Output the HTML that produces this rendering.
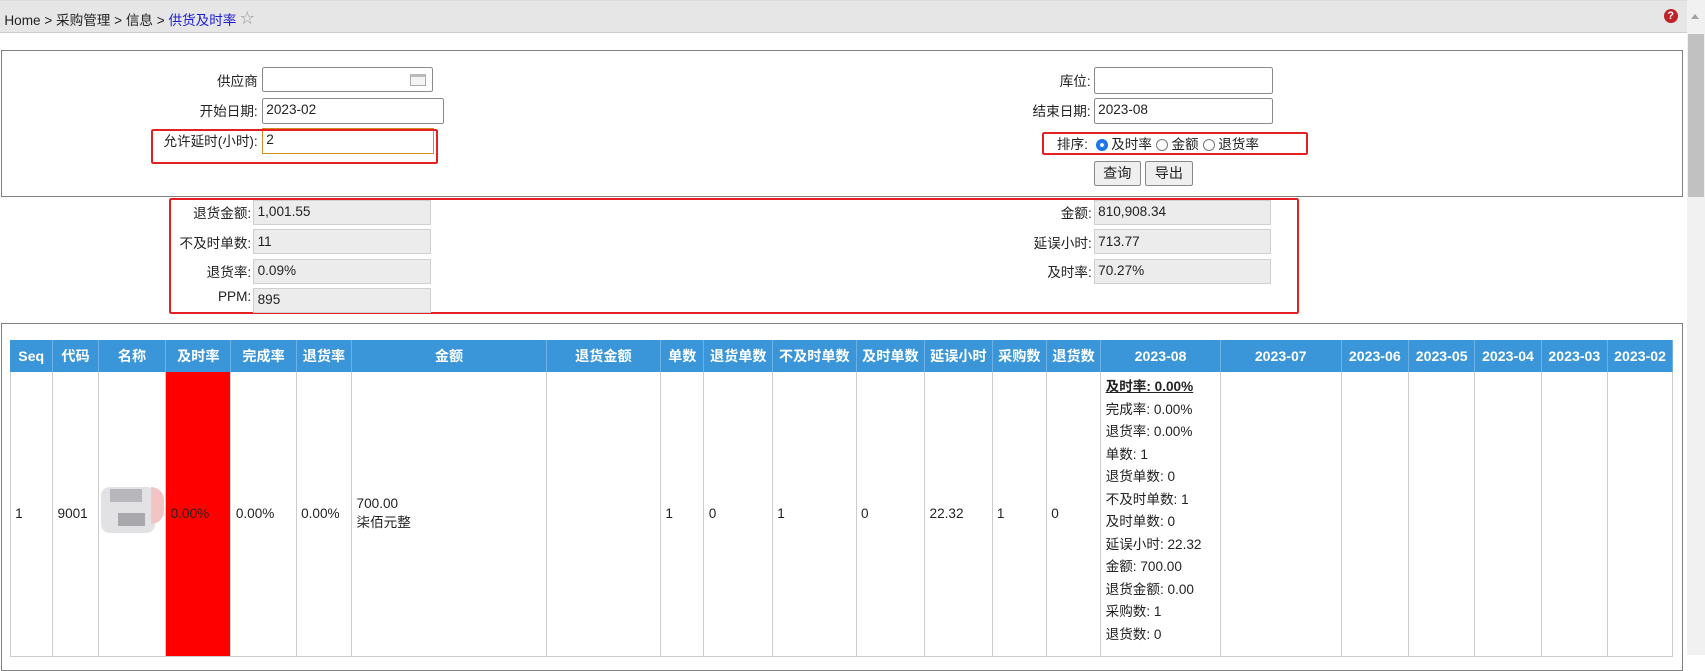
<!DOCTYPE html>
<html><head><meta charset="utf-8"><style>
html{zoom:1.08737}
body{margin:0;width:1568px;height:602px;overflow:hidden;position:relative;background:#fff;font-family:"Liberation Sans","Noto Sans CJK SC",sans-serif;font-size:12.5px;color:#222}
.a{position:absolute}
.bc{left:0;top:0;width:1551px;height:30px;background:#e6e6e6;border-bottom:1px solid #ccc;border-top:1px solid #ddd;box-sizing:border-box}
.lbl{text-align:right;white-space:nowrap}
.in{border:1px solid #8a8a8a;background:#fff;box-sizing:border-box;padding:1px 3px;line-height:18px;border-radius:2px}
.ro{background:#ececec;border:1px solid #d0d0d0;box-sizing:border-box;padding:1px 3px;line-height:18px}
.red{border:2px solid #e52020;border-radius:2px;box-sizing:border-box}
.btn{border:1px solid #888;background:#efefef;box-sizing:border-box;text-align:center;line-height:21px;border-radius:2px;font-size:13px}
table{border-collapse:collapse;table-layout:fixed}
th{background:#3a96d8;color:#fff;font-weight:bold;height:29px;padding:0;border-right:1px solid #6db2e6;font-size:13px}
td{border:1px solid #ccc;border-top:none;vertical-align:middle;padding:0 4px;height:257px}
.rad{display:inline-block;width:11px;height:11px;border:1px solid #777;border-radius:50%;vertical-align:-2px;margin:0 3px 0 4px;box-sizing:border-box}
.rad.on{border:3px solid #1a73e8;background:#fff;box-shadow:0 0 0 1px #1a73e8 inset}
</style></head><body>
<div class="a bc"></div>
<div class="a" style="left:4px;top:8px">Home &gt; 采购管理 &gt; 信息 &gt; <span style="color:#1d1dd0">供货及时率</span> <span style="color:#999;font-size:13px;position:relative;top:-2px">☆</span></div>
<div class="a" style="left:1530px;top:8px;width:13px;height:13px;border-radius:50%;background:#c0222a;color:#fff;font-size:10px;font-weight:bold;text-align:center;line-height:13px">?</div>
<div class="a" style="left:1551px;top:0;width:17px;height:602px;background:#f1f1f1"></div>
<div class="a" style="left:1555px;top:13px;width:0;height:0;border-left:4px solid transparent;border-right:4px solid transparent;border-bottom:5px solid #a3a3a3"></div>
<div class="a" style="left:1552px;top:31px;width:15px;height:150px;background:#c1c1c1"></div>

<div class="a" style="left:1px;top:46px;width:1547px;height:135px;border:1px solid #808080;box-sizing:border-box"></div>
<div class="a lbl" style="right:1331px;top:64px">供应商</div>
<div class="a in" style="left:241px;top:62px;width:157px;height:23px"></div>
<div class="a" style="left:377px;top:68px;width:15px;height:11px;border:1px solid #aaa;background:#f4f4f4;box-sizing:border-box;border-top:3px solid #bbb"></div>
<div class="a lbl" style="right:1331px;top:92px">开始日期:</div>
<div class="a in" style="left:241px;top:90px;width:167px;height:24px">2023-02</div>
<div class="a lbl" style="right:1331px;top:120px">允许延时(小时):</div>
<div class="a in" style="left:241px;top:118px;width:158px;height:24px;border-color:#d08a2a;border-radius:0">2</div>
<div class="a red" style="left:139px;top:119px;width:264px;height:32px"></div>

<div class="a lbl" style="right:565px;top:64px">库位:</div>
<div class="a in" style="left:1006px;top:62px;width:165px;height:24px"></div>
<div class="a lbl" style="right:565px;top:92px">结束日期:</div>
<div class="a in" style="left:1006px;top:90px;width:165px;height:24px">2023-08</div>
<div class="a" style="left:972px;top:122px">排序: <span class="rad on"></span>及时率<span class="rad"></span>金额<span class="rad"></span>退货率</div>
<div class="a red" style="left:958px;top:121px;width:245px;height:22px"></div>
<div class="a btn" style="left:1006px;top:148px;width:43px;height:23px">查询</div>
<div class="a btn" style="left:1053px;top:148px;width:44px;height:23px">导出</div>

<div class="a red" style="left:155px;top:182px;width:1040px;height:107px"></div>
<div class="a lbl" style="right:1337px;top:186px">退货金额:</div><div class="a ro" style="left:233px;top:184px;width:163px;height:23px">1,001.55</div>
<div class="a lbl" style="right:1337px;top:213px">不及时单数:</div><div class="a ro" style="left:233px;top:211px;width:163px;height:23px">11</div>
<div class="a lbl" style="right:1337px;top:240px">退货率:</div><div class="a ro" style="left:233px;top:238px;width:163px;height:23px">0.09%</div>
<div class="a lbl" style="right:1337px;top:266px">PPM:</div><div class="a ro" style="left:233px;top:265px;width:163px;height:23px">895</div>
<div class="a lbl" style="right:564px;top:186px">金额:</div><div class="a ro" style="left:1006px;top:184px;width:163px;height:23px">810,908.34</div>
<div class="a lbl" style="right:564px;top:213px">延误小时:</div><div class="a ro" style="left:1006px;top:211px;width:163px;height:23px">713.77</div>
<div class="a lbl" style="right:564px;top:240px">及时率:</div><div class="a ro" style="left:1006px;top:238px;width:163px;height:23px">70.27%</div>

<div class="a" style="left:1px;top:297px;width:1547px;height:320px;border:1px solid #808080;box-sizing:border-box"></div>
<table class="a" style="left:9px;top:313px;width:1529px">
<colgroup><col style="width:39px"><col style="width:42px"><col style="width:62px"><col style="width:60px"><col style="width:60px"><col style="width:51px"><col style="width:179px"><col style="width:105px"><col style="width:40px"><col style="width:63px"><col style="width:77px"><col style="width:63px"><col style="width:62px"><col style="width:50px"><col style="width:50px"><col style="width:110px"><col style="width:111px"><col style="width:62px"><col style="width:61px"><col style="width:61px"><col style="width:61px"><col style="width:60px"></colgroup>
<tr><th>Seq</th><th>代码</th><th>名称</th><th>及时率</th><th>完成率</th><th>退货率</th><th>金额</th><th>退货金额</th><th>单数</th><th>退货单数</th><th>不及时单数</th><th>及时单数</th><th>延误小时</th><th>采购数</th><th>退货数</th><th>2023-08</th><th>2023-07</th><th>2023-06</th><th>2023-05</th><th>2023-04</th><th>2023-03</th><th>2023-02</th></tr>
<tr><td>1</td><td>9001</td><td style="position:relative"><div style="position:absolute;left:2px;top:106px;width:50px;height:42px;background:#e2e2e4;border-radius:8px"></div><div style="position:absolute;left:10px;top:108px;width:30px;height:12px;background:#b8b8bc"></div><div style="position:absolute;left:18px;top:130px;width:24px;height:12px;background:#a9a9ad"></div><div style="position:absolute;left:48px;top:106px;width:12px;height:34px;background:#f3c4c4;border-radius:0 14px 14px 0"></div></td><td style="background:#f00">0.00%</td><td>0.00%</td><td>0.00%</td><td>700.00<br>柒佰元整</td><td></td><td>1</td><td>0</td><td>1</td><td>0</td><td>22.32</td><td>1</td><td>0</td>
<td style="line-height:20.7px;vertical-align:top;padding-top:4px"><b style="text-decoration:underline">及时率: 0.00%</b><br>完成率: 0.00%<br>退货率: 0.00%<br>单数: 1<br>退货单数: 0<br>不及时单数: 1<br>及时单数: 0<br>延误小时: 22.32<br>金额: 700.00<br>退货金额: 0.00<br>采购数: 1<br>退货数: 0</td><td></td><td></td><td></td><td></td><td></td><td></td></tr>
</table>
</body></html>
